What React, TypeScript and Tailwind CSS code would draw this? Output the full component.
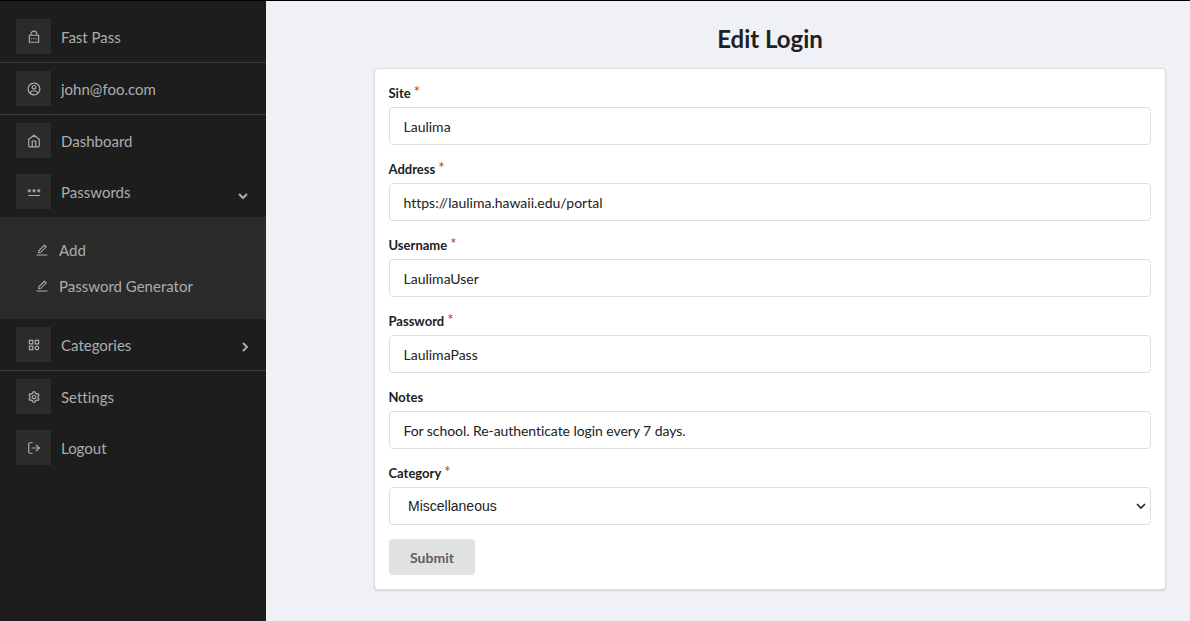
import type { ReactNode } from 'react';
import { RiLockPasswordLine } from 'react-icons/ri';
import { CgProfile } from 'react-icons/cg';
import { FiHome, FiLogOut } from 'react-icons/fi';
import { MdPassword } from 'react-icons/md';
import { AiOutlineEdit } from 'react-icons/ai';
import { BiCategory, BiCog } from 'react-icons/bi';

type MenuItemProps = { icon: ReactNode; label: string; suffix?: ReactNode };

function MenuItem({ icon, label, suffix }: MenuItemProps) {
  return (
    <a className="flex h-[51px] items-center pr-[18.5px] pl-4">
      <span className="flex h-[35px] w-[35px] items-center justify-center bg-[#2b2b2b]">{icon}</span>
      <span className="ml-2.5 flex-1">{label}</span>
      {suffix}
    </a>
  );
}

function SubItem({ label }: { label: string }) {
  return (
    <a className="flex h-9 items-center pl-[35px]">
      <AiOutlineEdit size={14} />
      <span className="ml-2.5">{label}</span>
    </a>
  );
}

function Chevron({ className }: { className: string }) {
  return (
    <svg viewBox="0 0 10 10" className={className} fill="none" stroke="currentColor">
      <path d="M1 3 L5 7 L9 3" />
    </svg>
  );
}

function Field({ label, required, children }: { label: string; required?: boolean; children: ReactNode }) {
  return (
    <div className="mb-3.5">
      <label className="-ml-[0.5px] mb-1 flex h-5 items-center pt-0.5 text-[13px] font-bold">
        {label}
        {required && <span className="-mt-[5px] ml-[3px] text-[15px] font-normal text-[#db2828]">*</span>}
      </label>
      {children}
    </div>
  );
}

function TextInput({ value, className = '' }: { value: string; className?: string }) {
  return (
    <input
      defaultValue={value}
      className={`block h-[38px] w-full rounded border border-[#dededf] px-[13.5px] text-[14px] outline-none ${className}`}
    />
  );
}

export default function App() {
  return (
    <div className="flex h-[621px] border-t border-black bg-[#f0f1f6] font-[Lato,sans-serif] text-[14px] text-[#212121] [font-variant-ligatures:none]">
      <nav className="w-[266px] shrink-0 bg-[#1d1d1d] pt-2.5 text-[15px] leading-5 text-[#adadad]">
        <div className="border-b border-[#3a3a3a]">
          <MenuItem icon={<RiLockPasswordLine size={14} />} label="Fast Pass" />
        </div>
        <div className="border-b border-[#3a3a3a]">
          <MenuItem icon={<CgProfile size={14} />} label="john@foo.com" />
        </div>
        <div className="border-b border-[#3a3a3a]">
          <MenuItem icon={<FiHome size={14} />} label="Dashboard" />
          <MenuItem
            icon={<MdPassword size={14} />}
            label="Passwords"
            suffix={<Chevron className="mt-2 h-2.5 w-2.5 stroke-2" />}
          />
          <div className="h-[102px] bg-[#2b2b2b] py-[15px]">
            <SubItem label="Add" />
            <SubItem label="Password Generator" />
          </div>
          <MenuItem
            icon={<BiCategory size={14} />}
            label="Categories"
            suffix={<Chevron className="mt-1 -mr-0.5 h-2.5 w-2.5 -rotate-90 stroke-2" />}
          />
        </div>
        <MenuItem icon={<BiCog size={14} />} label="Settings" />
        <MenuItem icon={<FiLogOut size={14} />} label="Logout" />
      </nav>

      <main className="flex-1 pr-6 pl-[108px]">
        <h2 className="mt-[22px] mb-3.5 h-[31px] text-center text-[24px] leading-[31px] font-bold">Edit Login</h2>
        <form className="h-[522px] rounded border border-[#dcddde] bg-white p-3.5 shadow-[0_1px_2px_0_rgba(34,36,38,0.15)]">
          <Field label="Site" required>
            <TextInput value="Laulima" />
          </Field>
          <Field label="Address" required>
            <TextInput value="https://laulima.hawaii.edu/portal" />
          </Field>
          <Field label="Username" required>
            <TextInput value="LaulimaUser" />
          </Field>
          <Field label="Password" required>
            <TextInput value="LaulimaPass" />
          </Field>
          <Field label="Notes">
            <TextInput value="For school. Re-authenticate login every 7 days." className="tracking-[-0.065px]" />
          </Field>
          <Field label="Category" required>
            <div className="flex h-[38px] items-center justify-between rounded border border-[#dededf] pr-1 pl-[18px] font-['Liberation_Sans',Arial,sans-serif] text-[14px]">
              <span className="pt-px">Miscellaneous</span>
              <Chevron className="h-2.5 w-2.5 stroke-[1.6]" />
            </div>
          </Field>
          <button type="button" className="h-9 w-[86px] rounded bg-[#e0e1e2] text-[14px] font-bold text-[#5f6061]">
            Submit
          </button>
        </form>
      </main>
    </div>
  );
}
